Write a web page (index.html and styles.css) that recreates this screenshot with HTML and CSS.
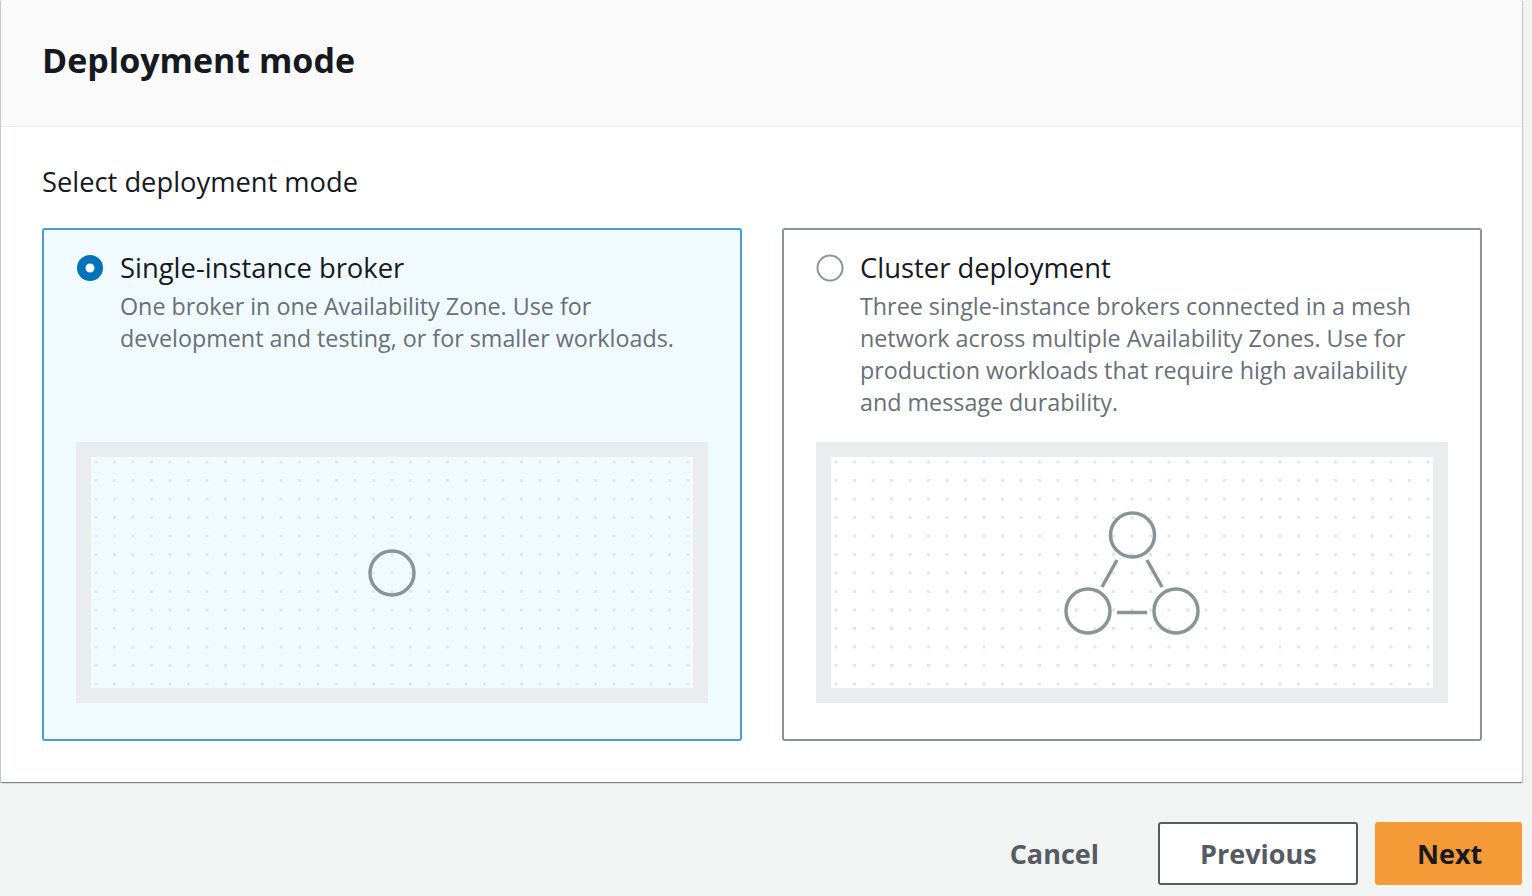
FILE: index.html
```html
<!DOCTYPE html>
<html lang="en">
<head>
<meta charset="utf-8">
<title>Deployment mode</title>
<link rel="stylesheet" href="styles.css">
</head>
<body>
<div class="page">
  <section class="panel">
    <header class="panel-header">
      <h2 class="panel-title">Deployment mode</h2>
    </header>
    <div class="panel-body">
      <div class="field-label">Select deployment mode</div>
      <div class="tiles">
        <label class="tile tile-selected">
          <div class="tile-top">
            <svg class="radio" width="28" height="28" viewBox="0 0 28 28"><circle cx="14" cy="14" r="8.75" fill="#fff" stroke="#0073bb" stroke-width="8.5"/></svg>
            <div class="tile-text">
              <div class="tile-title">Single-instance broker</div>
              <div class="tile-desc">One broker in one Availability Zone. Use for development and testing, or for smaller workloads.</div>
            </div>
          </div>
          <div class="diagram">
            <div class="diagram-inner">
              <svg class="diagram-svg" width="602" height="231" viewBox="0 0 602 231">
                <circle cx="301" cy="116" r="22" fill="none" stroke="#879596" stroke-width="3.5"/>
              </svg>
            </div>
          </div>
        </label>
        <label class="tile">
          <div class="tile-top">
            <svg class="radio" width="28" height="28" viewBox="0 0 28 28"><circle cx="14" cy="14" r="12.5" fill="#fff" stroke="#879596" stroke-width="2"/></svg>
            <div class="tile-text">
              <div class="tile-title">Cluster deployment</div>
              <div class="tile-desc">Three single-instance brokers connected in a mesh network across multiple Availability Zones. Use for production workloads that require high availability and message durability.</div>
            </div>
          </div>
          <div class="diagram">
            <div class="diagram-inner">
              <svg class="diagram-svg" width="602" height="231" viewBox="0 0 602 231">
                <g fill="none" stroke="#879596" stroke-width="3.5">
                  <circle cx="301.5" cy="78" r="22"/>
                  <circle cx="257" cy="154" r="22"/>
                  <circle cx="345" cy="154" r="22"/>
                  <line x1="286" y1="103" x2="271" y2="130"/>
                  <line x1="316" y1="103" x2="331" y2="130"/>
                  <line x1="286" y1="155.5" x2="316" y2="155.5"/>
                </g>
              </svg>
            </div>
          </div>
        </label>
      </div>
    </div>
  </section>
  <footer class="actions">
    <button class="btn btn-link">Cancel</button>
    <button class="btn btn-normal">Previous</button>
    <button class="btn btn-primary">Next</button>
  </footer>
</div>
</body>
</html>
```
FILE: styles.css
```css
html, body {
  margin: 0;
  padding: 0;
}
body {
  background: #f2f3f3;
  font-family: "Open Sans", "Noto Sans", Arial, sans-serif;
  color: #16191f;
}
.page {
  width: 1522px;
}
.panel {
  margin-left: 1px;
  background: #fff;
  box-shadow: 0 1px 1px 0 rgba(0, 28, 36, 0.3), 1px 1px 1px 0 rgba(0, 28, 36, 0.15), -1px 1px 1px 0 rgba(0, 28, 36, 0.15);
}
.panel-header {
  height: 126px;
  background: #fafafa;
  border-bottom: 1px solid #eaeded;
  display: flex;
  align-items: center;
  padding-left: 41px;
  box-sizing: content-box;
}
.panel-title {
  margin: 0;
  font-size: 34px;
  font-weight: 700;
  line-height: 40px;
  letter-spacing: 0;
  margin-top: -7px;
}
.panel-body {
  padding: 38px 40px 41px 41px;
}
.field-label {
  font-size: 27.3px;
  line-height: 34px;
  margin-bottom: 29px;
}
.tiles {
  display: grid;
  grid-template-columns: 700px 700px;
  column-gap: 40px;
}
.tile {
  display: flex;
  flex-direction: column;
  border: 2px solid #879596;
  border-radius: 3px;
  padding: 18px 32px 36px 32px;
  height: 513px;
  box-sizing: border-box;
  background: #fff;
}
.tile-selected {
  border-color: #44a0cc;
  background: #f1faff;
}
.tile-top {
  display: flex;
  gap: 16px;
  align-items: flex-start;
}
.radio {
  flex: none;
  margin-top: 6px;
}
.tile-title {
  font-size: 27.4px;
  line-height: 40px;
}
.tile-desc {
  font-size: 23.3px;
  line-height: 32px;
  margin-top: 2px;
  color: #687078;
  padding-right: 4px;
}
.diagram {
  margin-top: auto;
  background: #eaeded;
  padding: 15px;
  height: 261px;
  box-sizing: border-box;
}
.diagram-inner {
  height: 231px;
  background-color: #fff;
  background-image: radial-gradient(circle, #e3e6e6 1.4px, transparent 1.9px);
  background-size: 18.5px 18.5px;
  background-position: -4.25px -4.25px;
}
.tile-selected .diagram-inner {
  background-color: #f1faff;
}
.diagram-svg {
  display: block;
}
.actions {
  display: flex;
  justify-content: flex-end;
  align-items: center;
  gap: 17px;
  padding-top: 40px;
}
.btn {
  font-family: inherit;
  font-size: 27px;
  font-weight: 700;
  height: 63px;
  border-radius: 3px;
  padding: 0 40px;
  cursor: pointer;
  line-height: 1;
}
.btn-link {
  background: transparent;
  border: 2px solid transparent;
  color: #545b64;
}
.btn-normal {
  background: #fff;
  border: 2px solid #545b64;
  color: #545b64;
  width: 200px;
}
.btn-primary {
  background: #f49a36;
  border: 2px solid #f49a36;
  color: #16191f;
  width: 147px;
}
```
